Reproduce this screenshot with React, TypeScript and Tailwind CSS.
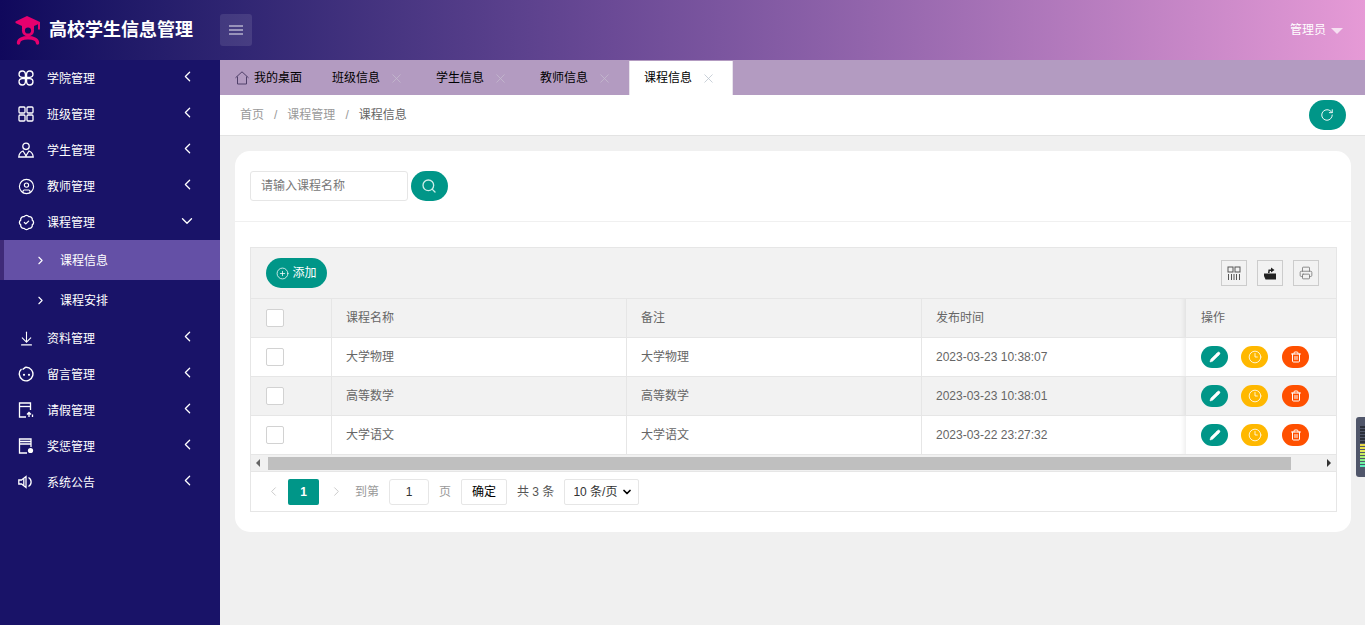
import { ChevronLeft, ChevronRight, ChevronDown, X, RotateCw, CirclePlus, Pencil, Clock3, Trash2, Printer, ArrowDownToLine, CircleUser, BadgeCheck, Search } from "lucide-react";

const Clover = () => (
  <svg viewBox="0 0 16 16" className="h-4 w-4" fill="none" stroke="currentColor" strokeWidth="1.3">
    <path d="M7.4 7.4 H4 A3.2 3.2 0 1 1 7.4 4 Z" />
    <path d="M8.6 7.4 H12 A3.2 3.2 0 1 0 8.6 4 Z" />
    <path d="M7.4 8.6 H4 A3.2 3.2 0 1 0 7.4 12 Z" />
    <path d="M8.6 8.6 H12 A3.2 3.2 0 1 1 8.6 12 Z" />
  </svg>
);

const Squares = () => (
  <svg viewBox="0 0 16 16" className="h-4 w-4" fill="none" stroke="currentColor" strokeWidth="1.3">
    <rect x="1" y="1" width="6" height="6" rx="1" />
    <rect x="9" y="1" width="6" height="6" rx="1" />
    <rect x="1" y="9" width="6" height="6" rx="1" />
    <rect x="9" y="9" width="6" height="6" rx="1" />
  </svg>
);

const Student = () => (
  <svg viewBox="0 0 16 16" className="h-4 w-4" fill="none" stroke="currentColor" strokeWidth="1.3">
    <circle cx="8" cy="4.3" r="3.2" />
    <path d="M5 9 C2.5 10 1 12 0.8 15 H15.2 C15 12 13.5 10 11 9 C10 10.5 9 12 8 14 C7 12 6 10.5 5 9 Z" />
  </svg>
);

const Face = () => (
  <svg viewBox="0 0 16 16" className="h-4 w-4" fill="none" stroke="currentColor" strokeWidth="1.4">
    <path d="M3.5 3 A6.8 6.8 0 1 0 8 1.2 C6.5 1.2 6 3.2 4.5 3.2" />
    <circle cx="6" cy="8.8" r="1.1" fill="currentColor" stroke="none" />
    <circle cx="11" cy="8.8" r="1.1" fill="currentColor" stroke="none" />
  </svg>
);

const Doc = () => (
  <svg viewBox="0 0 16 16" className="h-4 w-4" fill="none" stroke="currentColor" strokeWidth="1.3">
    <path d="M8 15 H1.5 V1 H12.5 V8" />
    <path d="M1.5 4.5 H12.5" />
    <path d="M11 15 V11 M9 12.5 L11 10.5 L13 12.5 M14.5 15 V12.5" />
  </svg>
);

const Card2 = () => (
  <svg viewBox="0 0 16 16" className="h-4 w-4" fill="none" stroke="currentColor" strokeWidth="1.3">
    <path d="M9 15 H1.5 V1 H13 V9" />
    <path d="M1.5 3.5 H13 M1.5 6 H13" strokeWidth="1.5" />
    <circle cx="12.5" cy="12.5" r="2.6" fill="currentColor" stroke="none" />
  </svg>
);

const Speaker = () => (
  <svg viewBox="0 0 16 16" className="h-4 w-4" fill="none" stroke="currentColor" strokeWidth="1.3">
    <path d="M0.8 6 H3.5 L8 2.5 V13.5 L3.5 10 H0.8 Z" />
    <path d="M5.8 4.5 V11.5" />
    <path d="M10.5 3.5 C14 5.5 14 10.5 10.5 12.5" />
  </svg>
);

const HomeLine = () => (
  <svg viewBox="0 0 14 14" className="mr-[5px] h-[14px] w-[14px] text-[#50406a]" fill="none" stroke="currentColor" strokeWidth="1">
    <path d="M0.5 6.8 L7 0.8 L13.5 6.8 M2.5 5.5 V13 H11.5 V5.5" />
  </svg>
);

const Hamburger = () => (
  <svg viewBox="0 0 16 10" className="h-[10px] w-[16px]" fill="none" stroke="currentColor" strokeWidth="0.9">
    <path d="M1 1 H15 M1 5 H15 M1 9 H15" />
  </svg>
);

const ColsIcon = () => (
  <svg viewBox="0 0 14 14" className="h-[14px] w-[14px] text-[#555]" fill="none" stroke="currentColor" strokeWidth="1">
    <rect x="1" y="1" width="5" height="5" />
    <rect x="8" y="1" width="5" height="5" />
    <path d="M1.5 8 V14 M4.5 8 V14 M7 8 V14 M9.5 8 V14 M12.5 8 V14" />
  </svg>
);

const ExportIcon = () => (
  <svg viewBox="0 0 14 14" className="h-[14px] w-[14px]" fill="#222">
    <path d="M1 7.5 H13 V13.5 H2.5 L1 10 Z" />
    <path d="M5 7 L5.5 3.5 L8 3.5 V1.5 L11.5 4 L8 6.5 V5 L6.8 5 L6.5 7 Z" />
  </svg>
);

const Logo = () => (
  <svg viewBox="0 0 27 30" className="h-[30px] w-[27px]" fill="#e6006e">
    <path d="M13 1 L26 7 V14.5 H24 V9.2 L20 11 V14 H8 V11 L1.5 8 V6.5 Z" />
    <circle cx="14" cy="15.5" r="4.6" fill="#120a5c" stroke="#e6006e" strokeWidth="3" />
    <path d="M4.5 28 C4.5 24.5 9 22.8 14 22.8 C19 22.8 23.5 24.5 23.5 28" fill="none" stroke="#e6006e" strokeWidth="3.4" strokeLinecap="round" />
  </svg>
);

const menus = [
  { name: "学院管理", icon: <Clover /> },
  { name: "班级管理", icon: <Squares /> },
  { name: "学生管理", icon: <Student /> },
  { name: "教师管理", icon: <CircleUser className="h-[17px] w-[17px]" strokeWidth={1.6} /> },
];

const menusAfter = [
  { name: "资料管理", icon: <ArrowDownToLine className="h-[17px] w-[17px]" strokeWidth={1.5} /> },
  { name: "留言管理", icon: <Face /> },
  { name: "请假管理", icon: <Doc /> },
  { name: "奖惩管理", icon: <Card2 /> },
  { name: "系统公告", icon: <Speaker /> },
];

const tabs = ["班级信息", "学生信息", "教师信息"];

const rows = [
  { name: "大学物理", time: "2023-03-23 10:38:07", bg: "bg-white" },
  { name: "高等数学", time: "2023-03-23 10:38:01", bg: "bg-[#f2f2f2]" },
  { name: "大学语文", time: "2023-03-22 23:27:32", bg: "bg-white" },
];

const meter = [
  "bg-[#2b2f3a]", "bg-[#2b2f3a]", "bg-[#2b2f3a]", "bg-[#2b2f3a]", "bg-[#2b2f3a]", "bg-[#2b2f3a]",
  "bg-[#e8d84a]", "bg-[#e8e04a]", "bg-[#dfe85a]", "bg-[#c8ec60]", "bg-[#a8ee70]", "bg-[#88ee88]", "bg-[#6eeea0]", "bg-[#5aeeb8]",
];

const MenuItem = ({ name, icon }: { name: string; icon: React.ReactNode }) => (
  <div className="flex h-9 items-center pl-[18px] pr-[24px] text-white">
    <span className="flex w-[29px] shrink-0 items-center">{icon}</span>
    <span className="flex-1 pt-[2px] text-[12px]">{name}</span>
    <ChevronLeft className="-mt-[3px] h-[17px] w-[17px]" strokeWidth={1.8} />
  </div>
);

const Cell = ({ className, children }: { className?: string; children?: React.ReactNode }) => (
  <div className={`flex items-center border-r border-[#e6e6e6] pl-[14px] ${className ?? ""}`}>{children}</div>
);

const Checkbox = () => <div className="ml-[1px] h-[18px] w-[18px] rounded-[2px] border border-[#d2d2d2] bg-white" />;

const RoundBtn = ({ color, children }: { color: string; children: React.ReactNode }) => (
  <div className={`flex h-[22px] w-[27px] items-center justify-center rounded-[11px] text-white ${color}`}>{children}</div>
);

const ToolBtn = ({ children }: { children: React.ReactNode }) => (
  <div className="flex h-[26px] w-[26px] items-center justify-center border border-[#ccc] text-[#333]">{children}</div>
);

export default function App() {
  return (
    <div className="flex h-[625px] w-[1365px] flex-col overflow-hidden bg-[#f0f0f0] [font-family:Liberation_Sans,Noto_Sans_CJK_SC,sans-serif]">
      <header className="flex h-[60px] shrink-0 items-center bg-gradient-to-r from-[#10085c] via-[#6b4a96] via-45% to-[#e69ad6]">
        <div className="flex w-[220px] items-center pl-[14px]">
          <Logo />
          <span className="ml-[8px] text-[18px] font-bold text-white">高校学生信息管理</span>
        </div>
        <div className="flex h-[32px] w-[32px] items-center justify-center rounded-[3px] bg-white/10 text-white">
          <Hamburger />
        </div>
        <div className="ml-auto flex items-center pr-[22px] text-[12px] text-white">
          管理员
          <span className="ml-[5px] mt-[2px] h-0 w-0 border-x-[6px] border-t-[6px] border-x-transparent border-t-white/70" />
        </div>
      </header>

      <div className="flex min-h-0 flex-1">
        <aside className="w-[220px] shrink-0 bg-[#191368]">
          {menus.map((m) => (
            <MenuItem key={m.name} {...m} />
          ))}
          <div className="flex h-9 items-center pl-[18px] pr-[24px] text-white">
            <span className="flex w-[29px] shrink-0 items-center">
              <BadgeCheck className="h-[17px] w-[17px]" strokeWidth={1.8} />
            </span>
            <span className="flex-1 pt-[2px] text-[12px]">课程管理</span>
            <ChevronDown className="-mt-[3px] h-[18px] w-[18px]" strokeWidth={1.8} />
          </div>
          <div className="flex h-10 items-center border-l-4 border-[#3f2a78] bg-[#6450a6] pl-[30px] pt-[1px] text-white">
            <ChevronRight className="h-[13px] w-[13px]" strokeWidth={2} />
            <span className="ml-[13px] text-[12px]">课程信息</span>
          </div>
          <div className="flex h-10 items-center pl-[34px] pt-[1px] text-white">
            <ChevronRight className="h-[13px] w-[13px]" strokeWidth={2} />
            <span className="ml-[13px] text-[12px]">课程安排</span>
          </div>
          {menusAfter.map((m) => (
            <MenuItem key={m.name} {...m} />
          ))}
        </aside>

        <main className="flex min-w-0 flex-1 flex-col">
          <div className="flex h-[35px] shrink-0 items-end bg-[#b39bc1] text-[12px] text-black">
            <div className="flex h-[34px] w-[97px] items-center pl-[15px]">
              <HomeLine />
              我的桌面
            </div>
            {tabs.map((t) => (
              <div key={t} className="flex h-[34px] w-[104px] items-center pl-[15px]">
                {t}
                <X className="ml-[9px] h-[15px] w-[15px] text-[#c5bccf]" strokeWidth={1.2} />
              </div>
            ))}
            <div className="flex h-[34px] w-[104px] items-center border-x border-[#e8e3ec] bg-white pl-[14px]">
              课程信息
              <X className="ml-[9px] h-[15px] w-[15px] text-[#b8c2cc]" strokeWidth={1.2} />
            </div>
          </div>

          <div className="flex h-[41px] shrink-0 items-center border-b border-[#e3e3e3] bg-white pl-[20px] pr-[19px] text-[12px] text-[#999]">
            <span>首页</span>
            <span className="mx-[10px]">/</span>
            <span>课程管理</span>
            <span className="mx-[10px]">/</span>
            <span className="text-[#666]">课程信息</span>
            <div className="ml-auto flex h-[30px] w-[37px] items-center justify-center rounded-[15px] bg-[#009688] pr-[2px] text-white">
              <RotateCw className="h-[14px] w-[14px]" strokeWidth={1.6} />
            </div>
          </div>

          <div className="flex-1 pl-[15px] pr-[14px] pt-[15px]">
            <section className="h-[381px] rounded-[15px] bg-white">
              <div className="flex h-[71px] items-center border-b border-[#f0f0f0] pl-[15px]">
                <div className="flex h-[30px] w-[158px] items-center rounded-[3px] border border-[#e6e6e6] pl-[10px] text-[12px] text-[#777]">
                  请输入课程名称
                </div>
                <div className="ml-[3px] flex h-[30px] w-[37px] items-center justify-center rounded-[15px] bg-[#009688] pr-[1px] text-[#cdeee9]">
                  <Search className="h-[16px] w-[16px]" strokeWidth={2} />
                </div>
              </div>

              <div className="mx-[15px] mr-[14px] mt-[25px] border border-[#e6e6e6] text-[12px] text-[#666]">
                <div className="flex h-[51px] items-center border-b border-[#e6e6e6] bg-[#f2f2f2] pl-[15px] pr-[17px]">
                  <div className="flex h-[30px] w-[61px] items-center justify-center rounded-[15px] bg-[#009688] text-white">
                    <CirclePlus className="mr-[3px] h-[13px] w-[13px]" strokeWidth={1.4} />
                    添加
                  </div>
                  <div className="ml-auto flex gap-[10px]">
                    <ToolBtn>
                      <ColsIcon />
                    </ToolBtn>
                    <ToolBtn>
                      <ExportIcon />
                    </ToolBtn>
                    <ToolBtn>
                      <Printer className="h-[14px] w-[14px] text-[#777]" strokeWidth={1.4} />
                    </ToolBtn>
                  </div>
                </div>

                <div className="grid h-[39px] grid-cols-[81px_295px_295px_264px_150px] border-b border-[#e6e6e6] bg-[#f2f2f2]">
                  <Cell><Checkbox /></Cell>
                  <Cell>课程名称</Cell>
                  <Cell>备注</Cell>
                  <Cell className="border-r-0 shadow-[inset_-5px_0_4px_-3px_rgba(0,0,0,0.07)]">发布时间</Cell>
                  <Cell className="border-r-0 pl-[15px]">操作</Cell>
                </div>

                {rows.map((r) => (
                  <div key={r.time} className={`grid h-[39px] grid-cols-[81px_295px_295px_264px_150px] border-b border-[#e6e6e6] ${r.bg}`}>
                    <Cell><Checkbox /></Cell>
                    <Cell>{r.name}</Cell>
                    <Cell>{r.name}</Cell>
                    <Cell className="border-r-0 shadow-[inset_-5px_0_4px_-3px_rgba(0,0,0,0.07)]">{r.time}</Cell>
                    <Cell className="border-r-0 pl-[15px]">
                      <RoundBtn color="bg-[#009688]"><Pencil className="h-3 w-3" fill="currentColor" strokeWidth={1} /></RoundBtn>
                      <div className="ml-[13px]">
                        <RoundBtn color="bg-[#ffb800]"><Clock3 className="h-[14px] w-[14px]" strokeWidth={1.4} /></RoundBtn>
                      </div>
                      <div className="ml-[14px]">
                        <RoundBtn color="bg-[#ff5000]"><Trash2 className="h-3 w-3" strokeWidth={2} /></RoundBtn>
                      </div>
                    </Cell>
                  </div>
                ))}

                <div className="flex h-[16px] items-center bg-[#f1f1f1] pl-[5px] pr-[5px]">
                  <span className="h-0 w-0 border-y-[4px] border-r-[4px] border-y-transparent border-r-[#666]" />
                  <div className="ml-[8px] h-[13px] w-[1023px] bg-[#bfbfbf]" />
                  <span className="ml-auto h-0 w-0 border-y-[4px] border-l-[4px] border-y-transparent border-l-[#333]" />
                </div>

                <div className="flex h-[40px] items-center border-t border-[#e6e6e6] pl-[15px] text-[#999]">
                  <ChevronLeft className="h-[15px] w-[15px] text-[#ccc]" strokeWidth={1.6} />
                  <div className="ml-[7px] flex h-[26px] w-[31px] items-center justify-center rounded-[2px] bg-[#009688] font-bold text-white">1</div>
                  <ChevronRight className="ml-[10px] h-[15px] w-[15px] text-[#ccc]" strokeWidth={1.6} />
                  <span className="ml-[11px]">到第</span>
                  <div className="ml-[10px] flex h-[26px] w-[40px] items-center justify-center rounded-[3px] border border-[#e6e6e6] text-[#333]">1</div>
                  <span className="ml-[10px]">页</span>
                  <div className="ml-[10px] flex h-[26px] w-[46px] items-center justify-center rounded-[2px] border border-[#e6e6e6] text-black">确定</div>
                  <span className="ml-[10px] text-[#555]">共 3 条</span>
                  <div className="ml-[10px] flex h-[26px] w-[75px] items-center rounded-[2px] border border-[#e6e6e6] pl-[8px] text-[#333]">
                    10 条/页
                    <ChevronDown className="ml-auto mr-[5px] h-[12px] w-[12px] text-black" strokeWidth={3.5} />
                  </div>
                </div>
              </div>
            </section>
          </div>
        </main>
      </div>

      {/* floating widget at the window edge */}
      <div className="absolute left-[1356px] top-[417px] flex h-[60px] w-[9px] flex-col gap-[1px] rounded-l-[3px] bg-[#50566a] pl-[4px] pt-[9px]">
        {meter.map((c, i) => (
          <div key={i} className={`h-[2px] w-full ${c}`} />
        ))}
      </div>
    </div>
  );
}
